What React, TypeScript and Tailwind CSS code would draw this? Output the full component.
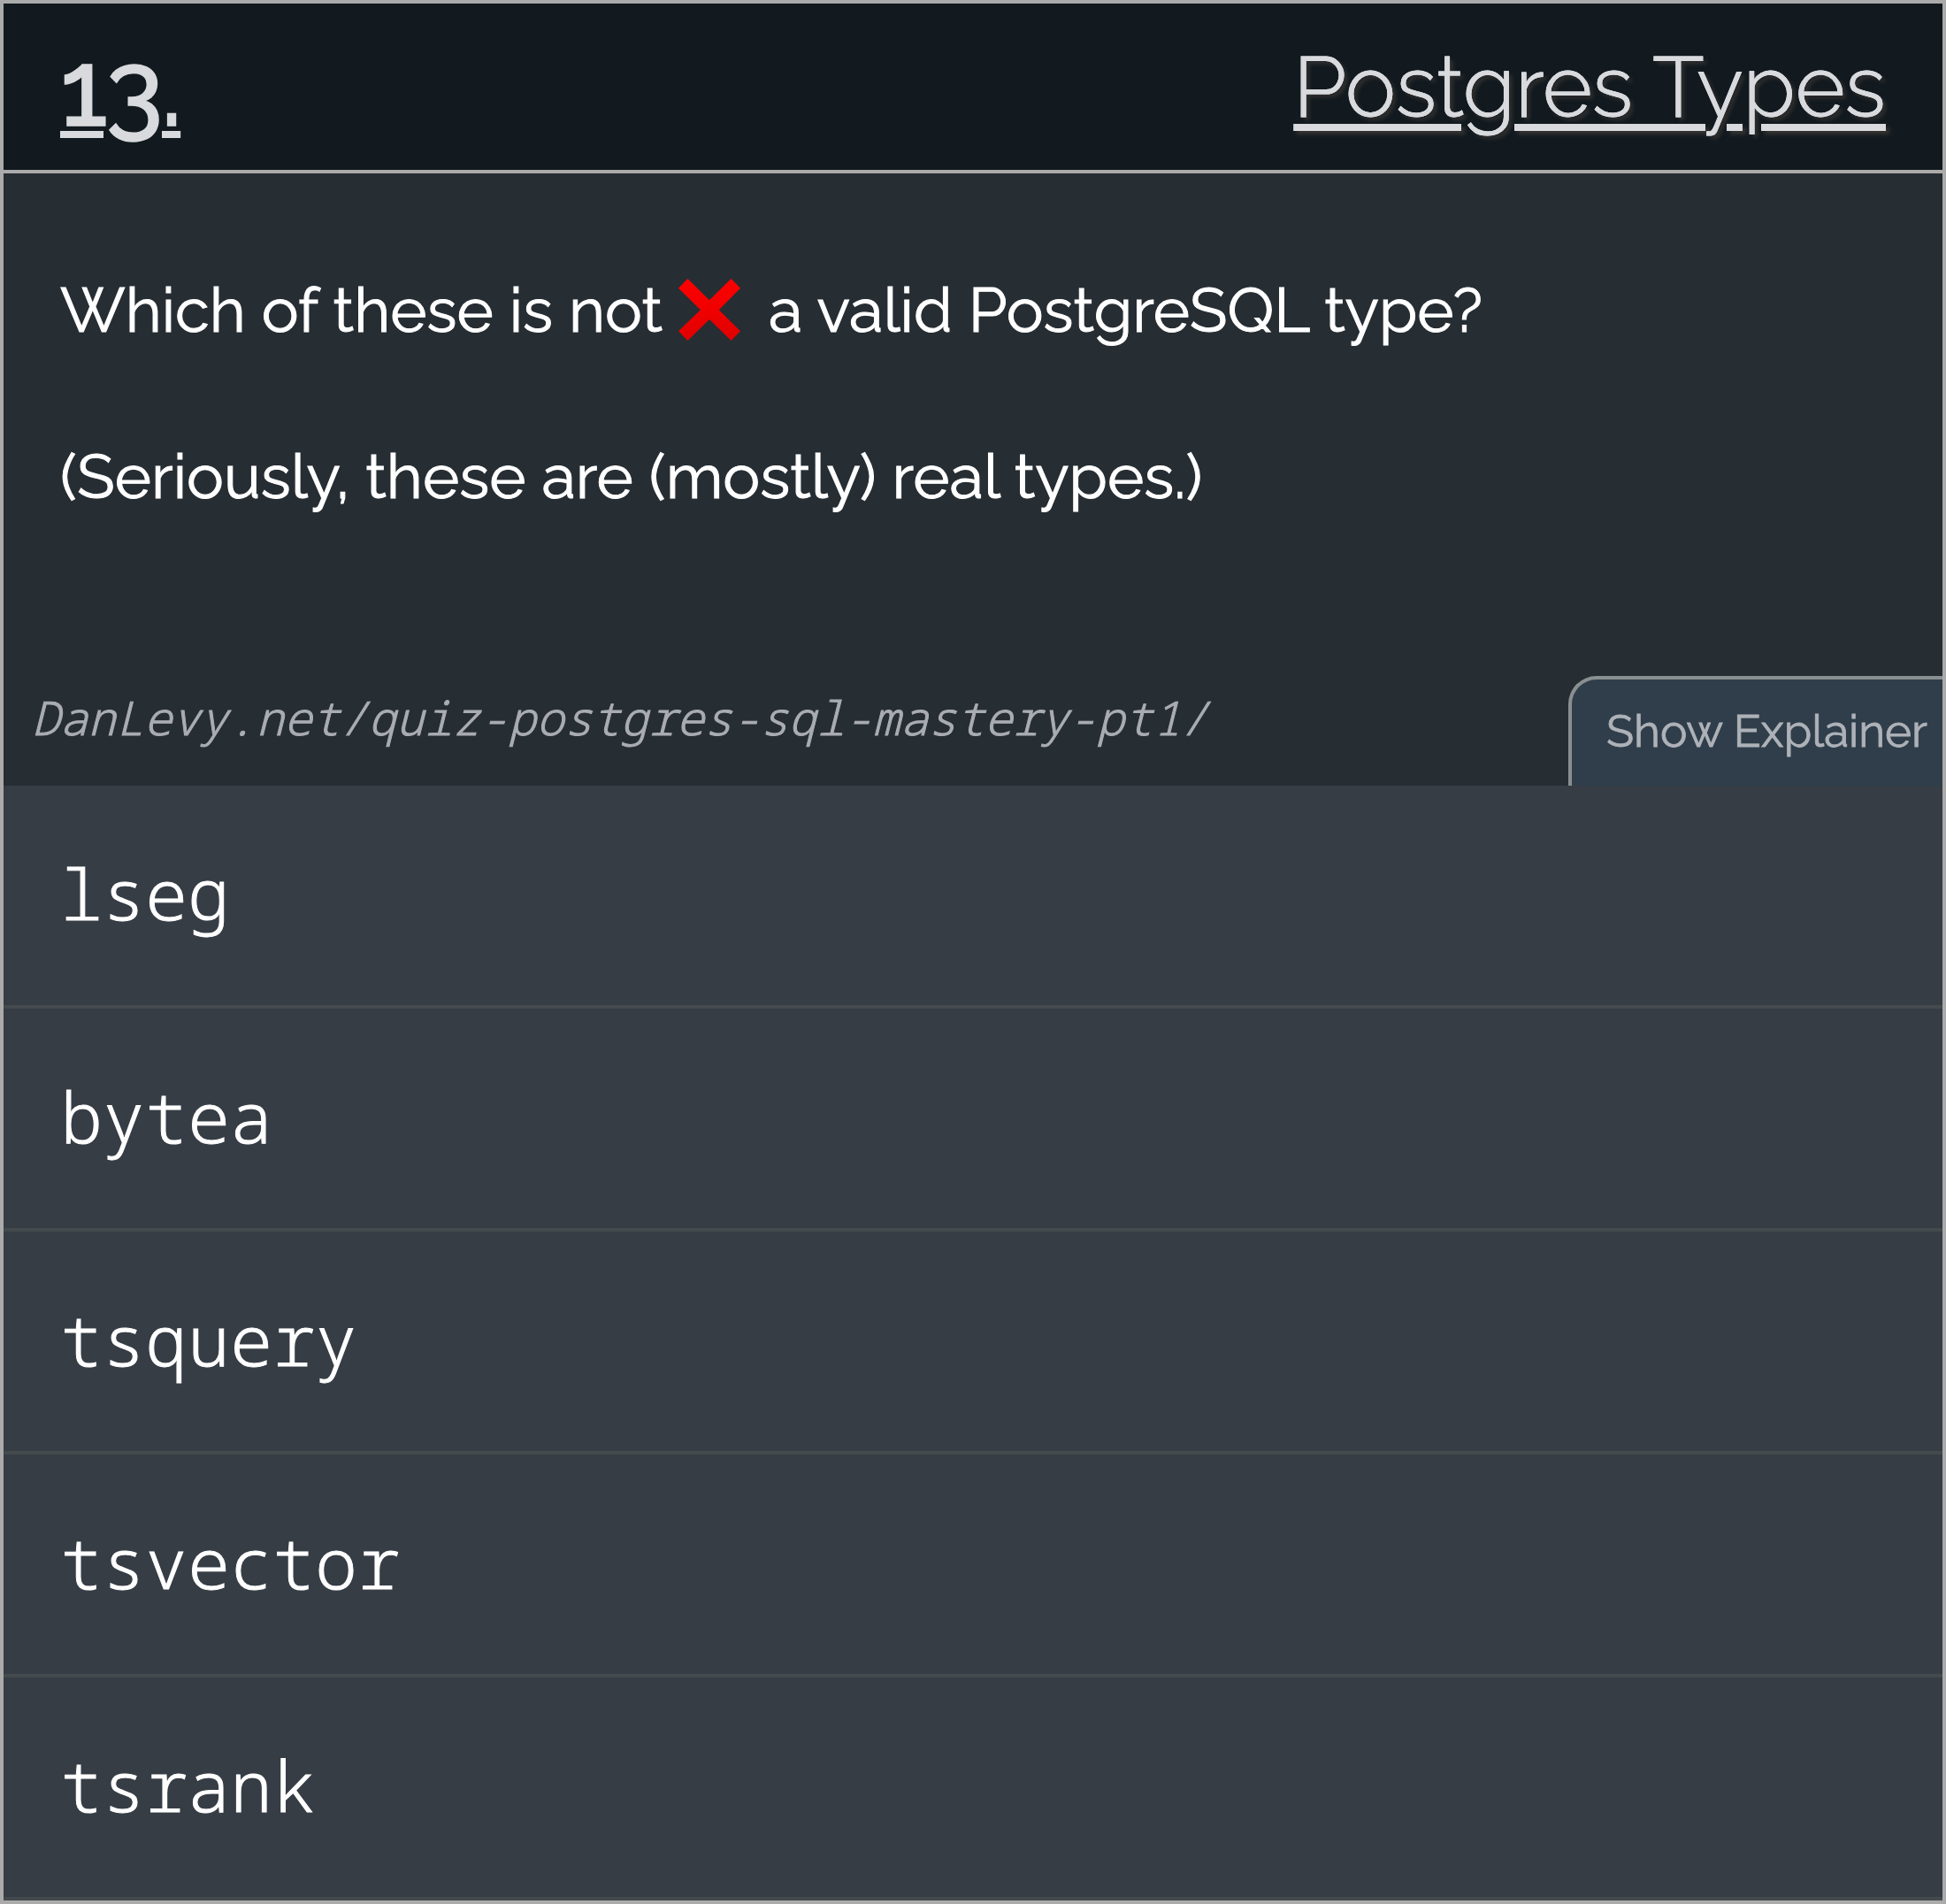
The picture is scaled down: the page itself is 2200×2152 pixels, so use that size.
const options = ["lseg", "bytea", "tsquery", "tsvector", "tsrank"];

function CrossMark() {
  return (
    <svg className="mt-3 mr-[32px] ml-[18px] h-[70px] w-[70px] shrink-0" viewBox="0 0 208 208" aria-hidden="true">
      <defs>
        <linearGradient id="cross" x1="0" y1="0" x2="0" y2="1">
          <stop offset="0" stopColor="#ff0000" />
          <stop offset="1" stopColor="#e00000" />
        </linearGradient>
      </defs>
      <path
        fill="url(#cross)"
        d="M31 0 104 72 177 0 208 32 136 105 208 176 177 208 104 137 31 208 0 176 74 105 0 32Z"
      />
    </svg>
  );
}

export default function App() {
  return (
    <div className="flex h-[2152px] w-[2200px] flex-col border-4 border-[#ababab] bg-[#262d33] font-['Raleway','Lato',sans-serif] text-white">
      <header className="flex h-[192px] shrink-0 items-start justify-between border-b-4 border-[#ababab] bg-[#121a20] px-16 text-[#d8dadd]">
        <h2 className="origin-left scale-x-[0.985] pt-[35px] text-[121px] leading-[121px] font-medium tracking-[-2px] underline decoration-8 underline-offset-[6px] [-webkit-text-stroke:1.5px_#d8dadd]">
          13.
        </h2>
        <h1 className="pt-[46px] text-[96px] leading-[96px] font-light tracking-[0.15px] underline decoration-8 underline-offset-[8px] [-webkit-text-stroke:1px_#d8dadd] [text-shadow:4px_4px_4px_#33312f]">
          Postgres Types
        </h1>
      </header>

      <section className="flex h-[692px] shrink-0 flex-col justify-between">
        <div className="flex flex-col gap-[94px] px-16 pt-[107px] text-[70.4px] leading-[94px] font-normal whitespace-nowrap [-webkit-text-stroke:1px_white]">
          <p className="flex h-[94px] items-start">
            <span>Which of these is not</span>
            <CrossMark />
            <span>a valid PostgreSQL type?</span>
          </p>
          <p>(Seriously, these are (mostly) real types.)</p>
        </div>
        <div className="flex h-[124px] items-start justify-between">
          <span className="pt-[15px] pl-8 font-['Noto_Sans_Mono',monospace] text-[52.8px] leading-[64px] font-light text-[#a9acb2] italic [-webkit-text-stroke:1px_#a9acb2]">
            DanLevy.net/quiz-postgres-sql-mastery-pt1/
          </span>
          <button className="h-full w-[423px] rounded-tl-[32px] border-t-4 border-l-4 border-[#8a8f91] bg-[#2f3e4a] pt-[28px] pl-[39px] text-left text-[51.2px] leading-[60px] font-normal whitespace-nowrap text-[#aeb2b8] [-webkit-text-stroke:0.8px_#aeb2b8]">
            <span className="block h-[92px]">Show Explainer</span>
          </button>
        </div>
      </section>

      <ul className="flex flex-col">
        {options.map((option) => (
          <li
            key={option}
            className="h-[252px] border-b-4 border-[#444a4d] bg-[#363d45] pt-[81px] pl-16 font-['Noto_Sans_Mono',monospace] text-[80px] leading-[80px] font-light [-webkit-text-stroke:1px_white]"
          >
            {option}
          </li>
        ))}
      </ul>
    </div>
  );
}
